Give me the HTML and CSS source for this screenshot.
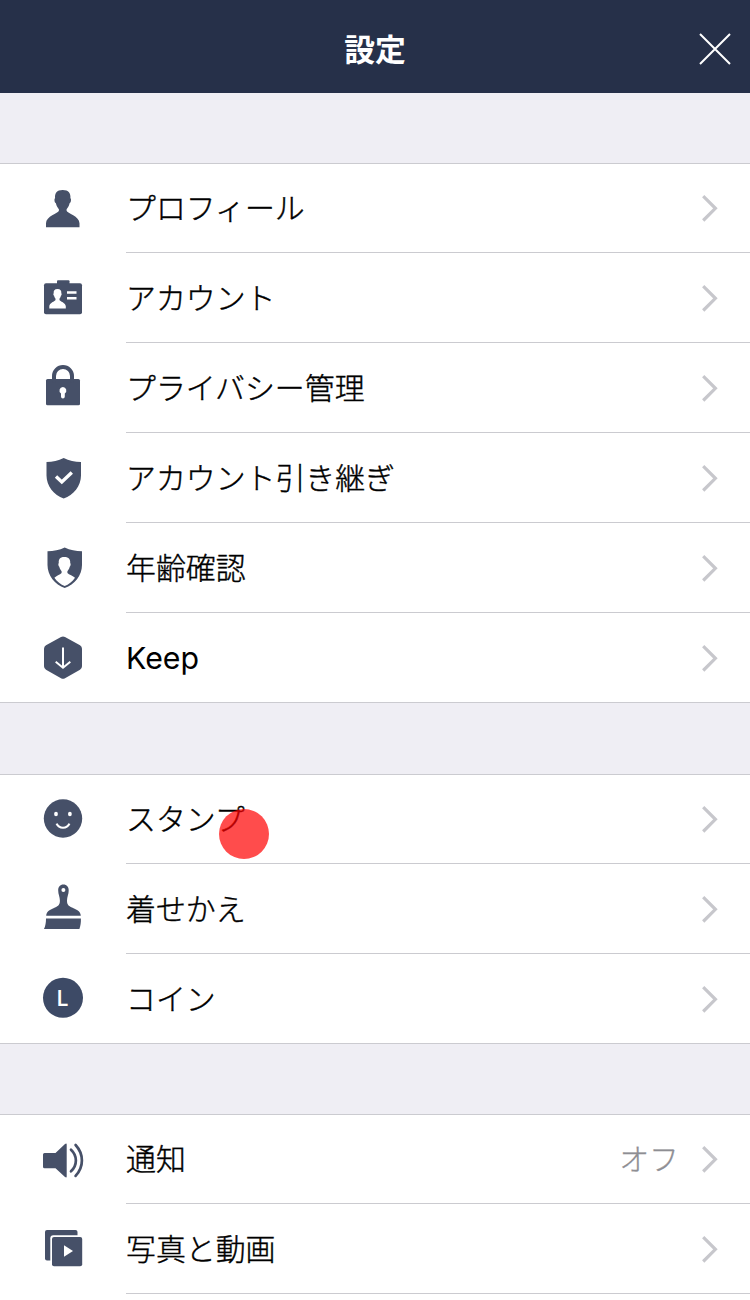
FILE: index.html
```
<!DOCTYPE html>
<html lang="ja">
<head>
<meta charset="utf-8">
<title>設定</title>
<link rel="stylesheet" href="styles.css">
</head>
<body>
<svg class="defs" width="0" height="0"><symbol id="chevron" viewBox="0 0 20 30"><path d="M3.200 3.100 15.400 15.300 3.200 27.500" fill="none" stroke="#c7c7cc" stroke-width="3.200"/></symbol></svg>
<header class="header">
  <h1 class="title">設定</h1>
  <svg class="close" viewBox="0 0 32 32"><path d="M1 1 31 31M31 1 1 31" stroke="#fff" stroke-width="2"/></svg>
</header>
<main>
<section class="group">
  <div class="row">
    <svg class="icon" viewBox="0 164 126 88"><path d="M62.700 190c6 0 8.200 3.500 7.700 8.200 1 .5.800 4-.8 5.100-.6 3-1.800 4.500-3 6v1.500c.6 2.600 12.900 5.400 12.900 12.400v4.100H46v-4.100c0-7 12.300-9.800 12.900-12.400v-1.500c-1.200-1.500-2.400-3-3-6-1.600-1.100-1.800-4.600-.8-5.100-.5-4.700 1.600-8.200 7.600-8.200z"/></svg>
    <div class="body"><span class="label">プロフィール</span><svg class="chevron"><use href="#chevron"/></svg></div>
  </div>
  <div class="row">
    <svg class="icon" viewBox="0 254 126 88"><rect x="57" y="280.300" width="12.500" height="6" rx="1"/><rect x="44" y="283.300" width="38" height="31" rx="2"/><path class="cut" d="M57.500 289c3 0 4.100 1.800 3.800 4.200.6.5.4 2-.4 2.600-.3 1.400-.8 2.100-1.400 2.900v1.200c.4 1.300 6.300 2.800 6.300 6.400v2.300H49.300v-2.300c0-3.600 5.800-5.100 6.200-6.400v-1.200c-.6-.8-1.100-1.500-1.400-2.900-.8-.6-1-2.100-.4-2.600-.3-2.400.8-4.200 3.800-4.200zM67 291.300h9.500v2.400H67zM67 297.100h9.500v2.500H67z"/></svg>
    <div class="body"><span class="label">アカウント</span><svg class="chevron"><use href="#chevron"/></svg></div>
  </div>
  <div class="row">
    <svg class="icon" viewBox="0 344 126 88"><rect x="46" y="379" width="34" height="26.300" rx="1.600"/><path class="line" stroke-width="4" d="M54 381v-5a9 9 0 0 1 18 0v5"/><path class="cut" d="M62.900 387a3.500 3.500 0 0 1 1.900 6.400v3.100a1.900 1.900 0 0 1-3.800 0v-3.100a3.500 3.500 0 0 1 1.900-6.400z"/></svg>
    <div class="body"><span class="label">プライバシー管理</span><svg class="chevron"><use href="#chevron"/></svg></div>
  </div>
  <div class="row">
    <svg class="icon" viewBox="0 434 126 88"><path d="M63.700 458q8 4 17.300 4v13.500c0 10-7.500 20-17.300 23-9.800-3-17.200-13-17.200-23V462q9.200 0 17.200-4z"/><path class="mark" stroke-width="3.400" d="M56 476.500 61.800 482 71.800 472.400"/></svg>
    <div class="body"><span class="label">アカウント引き継ぎ</span><svg class="chevron"><use href="#chevron"/></svg></div>
  </div>
  <div class="row">
    <svg class="icon" viewBox="0 524 126 88"><path d="M64.700 547.500q8 3.800 17.300 3.800V565c0 10-7.500 20-17.300 23-9.800-3-17.200-13-17.200-23v-13.700q9.200 0 17.200-3.800z"/><path class="cut" d="M64.300 557c4.700 0 6.300 2.700 5.900 6 .8.600.5 3-.5 3.700-.5 2-1.300 3.300-2.300 4.600v1.600c1.500 1.900 5.800 2.800 7.600 4.900-2.500 3.700-6.500 6.800-10.300 8.300-3.800-1.500-7.800-4.600-10.300-8.300 1.800-2.100 5.600-3 7.200-4.900v-1.600c-1-1.300-1.800-2.600-2.300-4.600-1-.7-1.300-3.100-.5-3.700-.4-3.300.8-6 5.500-6z"/></svg>
    <div class="body"><span class="label">年齢確認</span><svg class="chevron"><use href="#chevron"/></svg></div>
  </div>
  <div class="row">
    <svg class="icon" viewBox="0 614 126 88"><path d="M61 637q2-1.100 4 0l15 8.200q2 1.200 2 3.500v17.600q0 2.300-2 3.500l-15 8.400q-2 1.100-4 0l-15-8.400q-2-1.200-2-3.500v-17.600q0-2.300 2-3.500z"/><path class="mark" stroke-width="2" d="M63 647.500v20M55.700 661.800 63 667.700l7.300-5.900"/></svg>
    <div class="body"><span class="label latin">Keep</span><svg class="chevron"><use href="#chevron"/></svg></div>
  </div>
</section>
<section class="group group-stamps">
  <div class="row">
    <svg class="icon" viewBox="0 775 126 88"><circle cx="63" cy="818.500" r="19.200"/><ellipse class="cut" cx="56" cy="814" rx="1.900" ry="2.300"/><ellipse class="cut" cx="69.900" cy="814" rx="1.900" ry="2.300"/><path class="mark" stroke-width="2.200" d="M56.600 823.600c2.500 5.500 10.300 5.500 12.800 0"/></svg>
    <div class="body"><span class="label">スタンプ</span><svg class="chevron"><use href="#chevron"/></svg></div>
    <span class="touch"></span>
  </div>
  <div class="row">
    <svg class="icon" viewBox="0 865 126 88"><path d="M63.400 884.600c3.400 0 5.300 2.500 5.300 5.800 0 3.800-1.700 6.500-1.700 10 0 4.200 1.500 5.300 5 7 4 1.900 8.800 3.500 8.800 8.400H46.200c0-4.900 4.800-6.500 8.800-8.400 3.500-1.700 4.900-2.800 4.900-7 0-3.500-1.700-6.200-1.700-10 0-3.300 1.800-5.800 5.200-5.800zM46 918.600h34.900c.1 4-.3 7.500-1.500 10.400H44c1.500-2.800 2-6.500 2-10.400z"/><circle class="cut" cx="63.400" cy="890" r="2"/></svg>
    <div class="body"><span class="label">着せかえ</span><svg class="chevron"><use href="#chevron"/></svg></div>
  </div>
  <div class="row">
    <svg class="icon coin" viewBox="0 955 126 88"><circle cx="63" cy="997.800" r="20"/><text class="coin-letter" x="56.300" y="1005.800">L</text></svg>
    <div class="body"><span class="label">コイン</span><svg class="chevron"><use href="#chevron"/></svg></div>
  </div>
</section>
<section class="group">
  <div class="row">
    <svg class="icon" viewBox="0 1115 126 88"><path d="M44.500 1153H55.500L65 1144q1.700-1.200 1.700.5v32q0 1.700-1.700.5L55.500 1168.300h-11q-1.500 0-1.500-1.500v-12.300q0-1.500 1.500-1.500z"/><path class="line" stroke-width="2.700" d="M71 1149.700c6.500 6 6.500 15.600 0 21.600M75.600 1145c8.400 9.200 8.400 21.700 0 30.900"/></svg>
    <div class="body"><span class="label">通知</span><span class="value">オフ</span><svg class="chevron"><use href="#chevron"/></svg></div>
  </div>
  <div class="row">
    <svg class="icon" viewBox="0 1205 126 88"><rect x="45" y="1230" width="32.500" height="30.500" rx="2"/><rect class="cut" x="50.300" y="1235.300" width="34" height="33" rx="3"/><rect x="52" y="1237" width="30.200" height="29.300" rx="2"/><path class="cut" d="M64 1245.300 73 1251l-9 5.800z"/></svg>
    <div class="body"><span class="label">写真と動画</span><svg class="chevron"><use href="#chevron"/></svg></div>
  </div>
  <div class="row row-next"></div>
</section>
</main>
</body>
</html>
```
FILE: styles.css
```
* { box-sizing: border-box; }
body {
  margin: 0;
  background: #efeef4;
  color: #000;
  font-family: "Noto Sans CJK JP", sans-serif;
}
.defs { display: block; }
.header {
  height: 93px;
  display: grid;
  grid-template-columns: 1fr auto 1fr;
  align-items: center;
  padding-top: 5px;
  background: #263049;
}
.title {
  grid-column: 2;
  margin: 0;
  padding-bottom: 2px;
  color: #fff;
  font-size: 30.8px;
  font-weight: 700;
  line-height: 44px;
}
.close {
  width: 32px;
  height: 32px;
  justify-self: end;
  margin-right: 19px;
}
.group {
  margin-top: 70px;
  background: #fff;
  border-top: 1px solid #cbcbd0;
}
.group-stamps { margin-top: 71px; }
.row {
  position: relative;
  display: flex;
  align-items: flex-end;
  height: 90px;
}
.row:first-child { height: 89px; }
.row:last-child { border-bottom: 1px solid #cbcbd0; }
.row:last-child .body { border-bottom: 0; }
.row:last-child .icon { margin-bottom: 0; }
.row.row-next { height: 6px; border: 0; }
.icon {
  flex: none;
  width: 126px;
  height: 88px;
  margin-bottom: 1px;
  fill: #465068;
}
.coin { fill: #3d4a66; }
.cut { fill: #fff; }
.line { fill: none; stroke: #465068; stroke-linecap: round; }
.mark { fill: none; stroke: #fff; }
.coin-letter {
  fill: #fff;
  font: 600 22px "Open Sans", sans-serif;
}
.body {
  flex: 1;
  display: flex;
  align-items: flex-end;
  border-bottom: 1px solid #cbcbd0;
}
.label, .value {
  height: 88px;
  line-height: 84px;
  font-size: 29.9px;
  font-weight: 300;
  white-space: nowrap;
}
.label {
  flex: 1;
  -webkit-text-stroke: 0.4px #000;
}
.latin {
  line-height: 89px;
  font-family: Inter, sans-serif;
  font-size: 30.3px;
  font-weight: 400;
  -webkit-text-stroke: 0;
}
.value {
  margin-right: 21px;
  color: #8e8e93;
  -webkit-text-stroke: 0.3px #8e8e93;
}
.chevron {
  flex: none;
  width: 20px;
  height: 30px;
  margin: 0 30px 29px 0;
}
.touch {
  position: absolute;
  left: 219px;
  top: 34px;
  width: 50px;
  height: 50px;
  border-radius: 50%;
  background: rgba(255, 0, 0, 0.7);
}
```
